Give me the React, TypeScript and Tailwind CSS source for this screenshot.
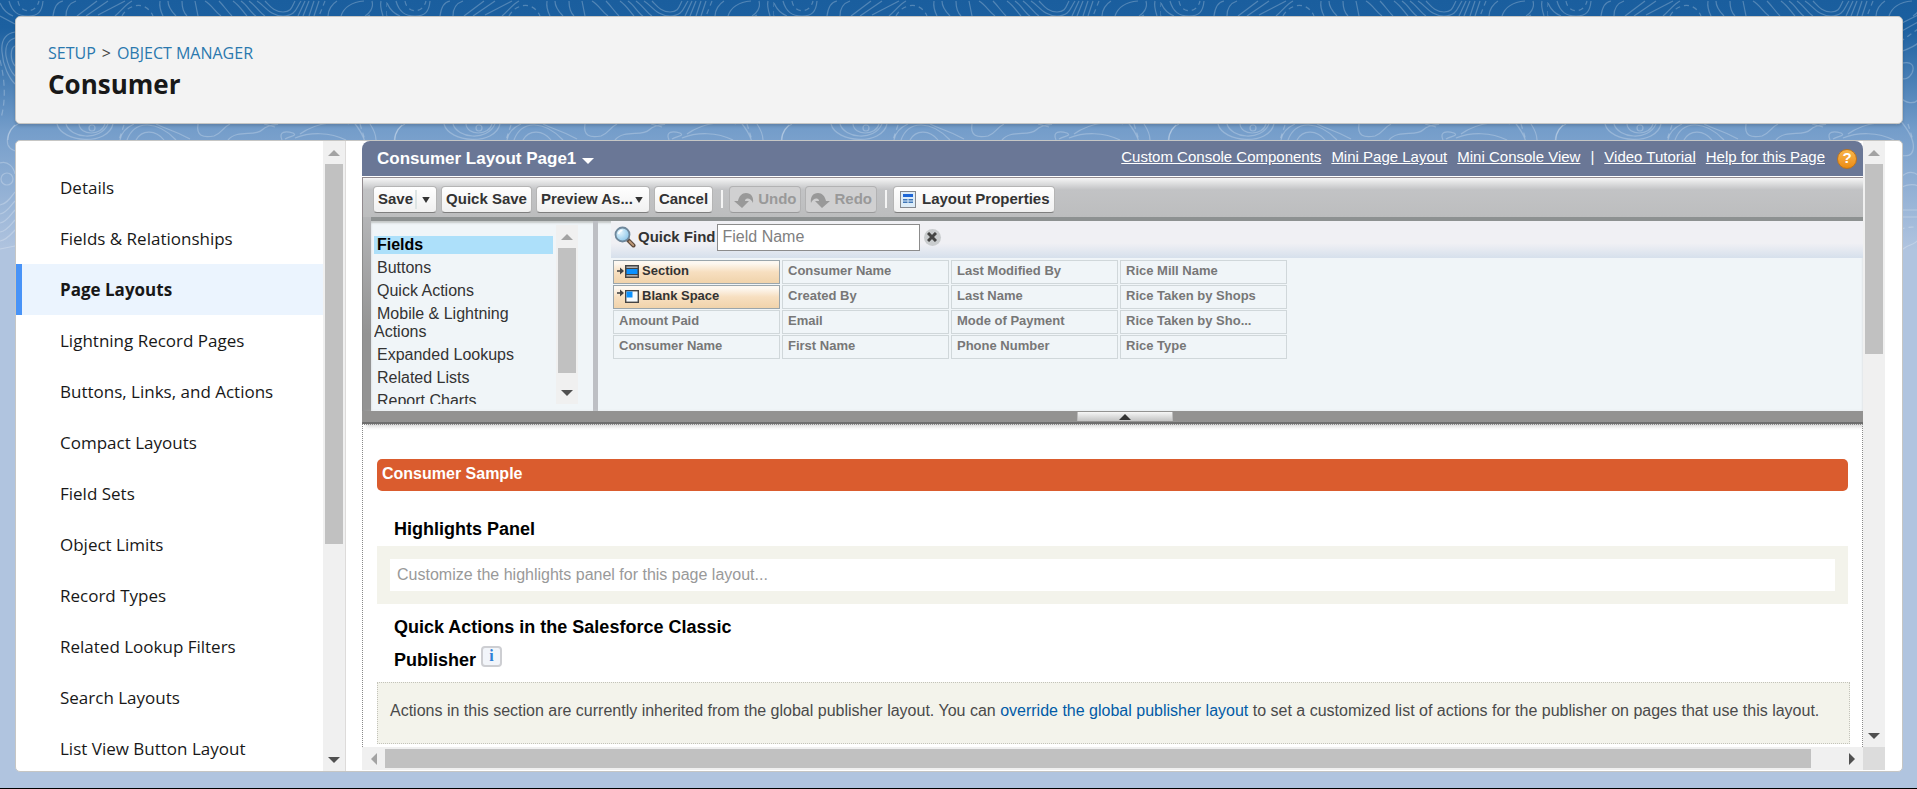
import type { ReactNode } from "react";

const setupLinks = [
  "Details",
  "Fields & Relationships",
  "Page Layouts",
  "Lightning Record Pages",
  "Buttons, Links, and Actions",
  "Compact Layouts",
  "Field Sets",
  "Object Limits",
  "Record Types",
  "Related Lookup Filters",
  "Search Layouts",
  "List View Button Layout",
];

const paletteCategories = [
  "Fields",
  "Buttons",
  "Quick Actions",
  "Mobile & Lightning Actions",
  "Expanded Lookups",
  "Related Lists",
  "Report Charts",
];

const fieldRows = [
  ["Section", "Consumer Name", "Last Modified By", "Rice Mill Name"],
  ["Blank Space", "Created By", "Last Name", "Rice Taken by Shops"],
  ["Amount Paid", "Email", "Mode of Payment", "Rice Taken by Sho..."],
  ["Consumer Name", "First Name", "Phone Number", "Rice Type"],
];

const helpLinks = ["Custom Console Components", "Mini Page Layout", "Mini Console View"];

function Contours() {
  return (
    <svg aria-hidden="true" className="absolute inset-x-0 top-0 -z-10 h-[252px] w-full">
      <defs>
        <pattern id="contours" width="387" height="252" patternUnits="userSpaceOnUse">
          <g fill="none" stroke="#fff" strokeOpacity="0.24" strokeWidth="1.2">
            <path d="M0 3C3 10 8 14 13 16M9 1C12 12 18 16 28 16S42 12 43 1M53 16C54 8 57 2 63 1M66 16C66 8 70 3 76 1M77 16L97 1M86 16L108 1" />
            <path d="M98 15L125 1M115 16C122 10 126 4 132 1M160 1C159 7 161 12 163 16M168 1C168 7 172 12 176 16M182 1C182 8 184 13 187 16M195 1L198 16" />
            <path d="M205 1C212 5 214 11 221 16M219 1C224 6 227 11 232 16M233 1C240 6 243 12 247 16M241 1C248 6 251 13 256 16M249 1C256 6 260 13 265 16M257 1C265 6 270 16 283 16S296 8 301 1M265 1C270 6 274 12 283 12S292 6 295 1M305 1L298 16M309 1L303 16M314 1L309 16M319 1L314 16" />
            <path d="M328 16C328 10 332 4 337 1M341 16C344 7 352 2 364 1M372 1C374 8 369 14 365 16M383 16C381 10 380 5 381 1" />
            <path strokeDasharray="5 4" d="M18 1C20 14 36 14 39 1M122 16C128 4 146 0 153 16M325 1L319 16M387 2V16" />
            <circle cx="92" cy="128" r="3" />
            <path d="M79 124C80 136 102 136 105 124M66 124C70 138 100 142 108 124M57 124C62 143 108 146 113 124M134 124C125 128 121 134 120 140M127 140C134 121 156 119 176 140M136 140C142 129 156 130 164 140M156 124C170 131 172 129 190 139" />
            <path d="M198 124C196 136 203 138 214 136C222 133 222 128 230 124M228 140C237 129 255 137 262 130C270 123 282 125 276 124M282 140C278 131 286 131 293 133C298 136 290 136 285 139M295 138C310 132 330 132 346 140M264 124L275 127M300 134C318 121 343 121 349 124M370 124C374 130 376 134 376 140M8 140C8 132 13 126 18 124" />
            <path strokeDasharray="5 4" d="M124 125L119 140M360 124L365 140" />
            <path d="M15 32C4 34 1 42 2 52C3 66 9 78 15 84M15 38C7 40 5 48 6 56C8 66 12 73 15 76M15 46C10 48 10 60 15 66M15 125C9 130 6 138 8 145C10 150 14 150 15 151M0 163C8 160 14 168 15 174M15 24L0 16" />
            <circle cx="7" cy="179" r="6" />
            <path d="M0 205C7 204 11 197 15 192M0 214C7 213 11 205 15 201M0 223C7 222 11 214 15 210M0 232C7 231 11 224 15 220M0 241C7 240 11 234 15 230M0 249L15 246" />
            <path strokeDasharray="6 4" d="M0 60C5 80 6 100 1 118" />
            <path d="M352 24L370 15M352 32L370 22M352 52C360 49 366 47 370 43M352 64C364 60 367 66 364 73C361 79 356 80 352 78M352 97C358 104 366 104 370 100M352 120C362 132 367 142 365 150C363 158 356 155 352 156M352 178C360 170 366 172 370 175M352 188C360 184 366 184 370 186M352 210H370M352 217H370M352 252C358 244 366 246 370 240" />
            <path strokeDasharray="5 4" d="M352 42L370 29M352 230C358 226 366 228 370 226" />
          </g>
        </pattern>
      </defs>
      <rect width="100%" height="252" fill="url(#contours)" />
    </svg>
  );
}

function Triangle({ className, d }: { className: string; d: string }) {
  return (
    <svg aria-hidden="true" viewBox="0 0 12 12" className={"h-3 w-3 " + className}>
      <path d={d} fill="currentColor" />
    </svg>
  );
}

const UP = "M0 9L6 3L12 9Z";
const DOWN = "M0 3L6 9L12 3Z";
const LEFT = "M9 0L3 6L9 12Z";
const RIGHT = "M3 0L9 6L3 12Z";
const CARET = "M1 2L6 10L11 2Z";

function VerticalBar({ thumb }: { thumb: string }) {
  return (
    <div aria-hidden="true" className="flex w-[22px] shrink-0 flex-col items-center bg-[#f0f0f0]">
      <div className="flex h-[23px] shrink-0 items-center">
        <Triangle d={UP} className="text-[#a3a3a3]" />
      </div>
      <div className="min-h-0 w-full flex-1 px-[2px]">
        <div className={"w-full bg-[#c1c1c1] " + thumb} />
      </div>
      <div className="flex h-[23px] shrink-0 items-center">
        <Triangle d={DOWN} className="text-[#505050]" />
      </div>
    </div>
  );
}

function ToolButton({ children, disabled = false }: { children: ReactNode; disabled?: boolean }) {
  return (
    <button
      type="button"
      disabled={disabled}
      className={
        "flex h-[27px] items-center rounded-[4px] border px-1 whitespace-nowrap " +
        (disabled
          ? "border-[#b2b2b3] border-b-[#9a9a9b] bg-[#d0d0d1] text-[#999]"
          : "border-[#b5b5b5] border-b-[#7f7f7f] bg-linear-to-b from-white to-[#f0f0f0] text-[#333]")
      }
    >
      {children}
    </button>
  );
}

function TurnArrow({ flip = false }: { flip?: boolean }) {
  return (
    <svg
      aria-hidden="true"
      viewBox="0 0 20 16"
      className={"mr-1 h-4 w-5 " + (flip ? "-scale-x-100" : "")}
    >
      <path d="M0 9H4C5 4 8 1 12 1C17 1 20 5 19 11C18 8 15 6 13 6.500C11.500 7 11 8 11 9H15L8 16Z" fill="#999" />
    </svg>
  );
}

function LayoutIcon() {
  return (
    <svg aria-hidden="true" viewBox="0 0 16 17" className="mr-[6px] ml-[2px] h-[17px] w-4">
      <rect x=".5" y=".5" width="15" height="16" fill="#dcecf8" stroke="#84888e" />
      <path d="M3 3h10v3h-10z" fill="#1d66d6" />
      <path d="M3 8h4.500v1.500H3zM8.500 8h4.500v1.500H8.500zM3 10.500h4.500V12H3zM8.500 10.500h4.500V12H8.500z" fill="#3f76b8" />
    </svg>
  );
}

function Magnifier() {
  return (
    <svg aria-hidden="true" viewBox="0 0 22 22" className="h-[22px] w-[22px]">
      <defs>
        <radialGradient id="lens" cx=".35" cy=".35" r=".8">
          <stop offset="0" stopColor="#e4f5fd" />
          <stop offset="1" stopColor="#7fbfe6" />
        </radialGradient>
      </defs>
      <path d="M13.500 13.500L19.500 19.500" stroke="#5d4a3c" strokeWidth="4" strokeLinecap="round" />
      <path d="M15.500 15.500L19.200 19.200" stroke="#c09a78" strokeWidth="1.800" strokeLinecap="round" />
      <circle cx="8.500" cy="8.500" r="7" fill="url(#lens)" stroke="#6f879b" strokeWidth="1.800" />
      <path d="M4.500 8C5 5.500 6.500 4.500 8.500 4.200" fill="none" stroke="#fff" strokeWidth="1.600" />
    </svg>
  );
}

function SectionIcon({ blank }: { blank: boolean }) {
  return (
    <svg aria-hidden="true" viewBox="0 0 22 14" className="mr-[3px] h-[14px] w-[22px] shrink-0">
      <g transform={blank ? "translate(0 -2)" : "translate(0 1)"}>
        <path d="M0 6h4" stroke="#444" strokeWidth="1.600" />
        <path d="M3 2.500L7 6L3 9.500Z" fill="#444" />
      </g>
      {blank ? (
        <>
          <rect x="8.700" y="1.700" width="12.600" height="11.600" fill="#f6fafd" stroke="#444" strokeWidth="1.400" />
          <rect x="9.500" y="2.500" width="6" height="6" fill="#0a91ff" />
        </>
      ) : (
        <>
          <rect x="8.700" y="1.700" width="12.600" height="11.600" fill="#b0b0b0" stroke="#444" strokeWidth="1.400" />
          <rect x="9" y="4.500" width="12" height="6" fill="#0a91ff" stroke="#444" />
        </>
      )}
    </svg>
  );
}

function SetupNav() {
  return (
    <div className="flex w-[330px] shrink-0 border-r border-[#dddbda]">
      <nav aria-label="Object setup" className="min-w-0 flex-1 overflow-hidden pt-[21px]">
        {setupLinks.map((label) => {
          const active = label === "Page Layouts";
          return (
            <a
              key={label}
              href="#"
              aria-current={active ? "page" : undefined}
              className={
                "flex h-[51px] items-center border-l-[6px] pl-[38px] text-[17px] " +
                (active
                  ? "border-[#4893f7] bg-[#ebf4fe] font-bold text-[#181818]"
                  : "border-transparent text-[#181818]")
              }
            >
              {label}
            </a>
          );
        })}
      </nav>
      <VerticalBar thumb="h-[65%]" />
    </div>
  );
}

function EditorHeader() {
  return (
    <div className="flex h-[35px] shrink-0 items-center justify-between rounded-t-lg bg-[#6a7796] pr-[6px] pl-[15px] text-white">
      <button type="button" className="flex items-center text-[17px] font-bold">
        Consumer Layout Page1
        <Triangle d={DOWN} className="mt-1 ml-[6px]" />
      </button>
      <div className="flex items-center text-[15px]">
        <div className="flex gap-[10px] pb-[2px]">
          {helpLinks.map((label) => (
            <a key={label} href="#" className="underline">
              {label}
            </a>
          ))}
          <span>|</span>
          <a href="#" className="underline">
            Video Tutorial
          </a>
          <a href="#" className="underline">
            Help for this Page
          </a>
        </div>
        <span
          aria-hidden="true"
          className="ml-3 flex h-5 w-5 items-center justify-center rounded-full border border-[#c0741a] bg-linear-to-b from-[#f8b64a] to-[#ec8c0c] text-[15px] font-bold"
        >
          ?
        </span>
      </div>
    </div>
  );
}

function Toolbar() {
  return (
    <div className="mt-px flex h-[40px] shrink-0 items-start gap-1 border-t border-l border-[#918a8e] bg-linear-to-b from-[#f6f6f6] via-[#c2c3c5] via-30% to-[#bcbdbe] pt-2 pl-[10px] text-[15px] font-bold">
      <ToolButton>
        Save
        <span className="mr-[3px] ml-[2px] h-[19px] w-[2px] bg-[#dde4e4]" />
        <Triangle d={CARET} className="scale-75 text-[#333]" />
      </ToolButton>
      <ToolButton>Quick Save</ToolButton>
      <ToolButton>
        Preview As...
        <Triangle d={CARET} className="scale-75 text-[#333]" />
      </ToolButton>
      <ToolButton>Cancel</ToolButton>
      <span className="mt-1 mr-[2px] ml-1 h-[18px] w-[2px] bg-[#f4f4f4]" />
      <ToolButton disabled>
        <TurnArrow />
        Undo
      </ToolButton>
      <ToolButton disabled>
        <TurnArrow flip />
        Redo
      </ToolButton>
      <span className="mt-1 mr-[2px] ml-1 h-[18px] w-[2px] bg-[#f4f4f4]" />
      <ToolButton>
        <LayoutIcon />
        Layout Properties
      </ToolButton>
    </div>
  );
}

function CategoryList() {
  return (
    <div className="flex w-[222px] shrink-0 pt-1 pb-[7px] pl-[3px]">
      <ul className="w-[179px] overflow-hidden pt-[11px] text-[16px] leading-[18px] text-[#333]">
        {paletteCategories.map((label) => (
          <li
            key={label}
            className={"mb-[5px] indent-[3px] " + (label === "Fields" ? "bg-[#ade0fa] font-bold text-black" : "")}
          >
            {label}
          </li>
        ))}
      </ul>
      <div className="ml-[3px] flex">
        <VerticalBar thumb="h-[94%]" />
      </div>
    </div>
  );
}

function FieldPalette() {
  return (
    <div className="min-w-0 flex-1 pl-[13px]">
      <div className="flex h-[37px] items-center bg-linear-to-b from-[#f0f0f4] from-60% to-[#d6e0ec] pb-[5px] pl-[3px]">
        <label htmlFor="quick-find" className="flex items-center gap-[2px] text-[15px] font-bold text-[#333]">
          <Magnifier />
          Quick Find
        </label>
        <input
          id="quick-find"
          type="text"
          placeholder="Field Name"
          className="ml-px h-[27px] w-[203px] border border-[#8c8c8c] bg-white px-[5px] text-[16px] placeholder:text-[#808080]"
        />
        <button
          type="button"
          aria-label="Clear"
          className="ml-1 flex h-[17px] w-[17px] items-center justify-center rounded-full bg-[#c9ccce]"
        >
          <svg aria-hidden="true" viewBox="0 0 10 10" className="h-[10px] w-[10px]">
            <path d="M1 1L9 9M9 1L1 9" stroke="#444" strokeWidth="3" />
          </svg>
        </button>
      </div>
      <table className="mt-px border-separate border-spacing-x-[2px] border-spacing-y-px text-[13px] leading-[18px] font-bold text-[#777]">
        <tbody>
          {fieldRows.map((row, r) => (
            <tr key={r}>
              {row.map((label, c) => {
                const tool = c === 0 && r < 2;
                return (
                  <td
                    key={c}
                    className={
                      "h-6 w-[167px] border pb-[3px] whitespace-nowrap " +
                      (tool
                        ? "border-[#9aa5ab] bg-linear-to-b from-[#fdf8f1] from-10% via-[#f7dfc0] via-50% to-[#f0d3ab] pl-[3px] text-[#333]"
                        : "border-[#d0d7da] pl-[5px]")
                    }
                  >
                    {tool ? (
                      <span className="flex items-center">
                        <SectionIcon blank={r === 1} />
                        {label}
                      </span>
                    ) : (
                      label
                    )}
                  </td>
                );
              })}
            </tr>
          ))}
        </tbody>
      </table>
    </div>
  );
}

function LayoutPreview() {
  return (
    <div className="min-h-0 flex-1 overflow-hidden border-x border-t border-dotted border-[#8a8a8a] px-[14px] pt-[34px]">
      <h2 className="flex h-8 items-center rounded-[5px] bg-[#da5c2e] px-[5px] pb-[2px] text-[16px] font-bold text-white">
        Consumer Sample
      </h2>
      <h3 className="mt-[22px] pl-[17px] text-[18px] leading-[33px] font-bold text-black">Highlights Panel</h3>
      <div className="bg-[#f3f3eb] p-[13px]">
        <p className="bg-white px-[7px] text-[16px] leading-8 text-[#999]">
          Customize the highlights panel for this page layout...
        </p>
      </div>
      <h3 className="mt-[7px] w-[400px] pl-[17px] text-[18px] leading-[33px] font-bold text-black">
        Quick Actions in the Salesforce Classic Publisher{" "}
        <button
          type="button"
          aria-label="Information"
          className="inline-flex h-[21px] w-[21px] items-center justify-center rounded-[4px] border-2 border-[#cdced2] bg-[#f2f5fa] align-[5px] font-['Liberation_Serif',serif] text-[16px] leading-none font-bold text-[#2f7fd6]"
        >
          i
        </button>
      </h3>
      <div className="mt-[5px] -mr-[2px] border border-dotted border-[#c3c3ba] bg-[#f3f3eb] px-3 pt-3 pb-4 text-[16px] leading-8 whitespace-nowrap text-[#4a4a4a]">
        Actions in this section are currently inherited from the global publisher layout. You can{" "}
        <a href="#" className="text-[#015ba7]">
          override the global publisher layout
        </a>{" "}
        to set a customized list of actions for the publisher on pages that use this layout.
      </div>
    </div>
  );
}

function HorizontalBar() {
  return (
    <div aria-hidden="true" className="flex h-[23px] shrink-0 bg-[#f0f0f0]">
      <div className="flex w-[23px] items-center justify-center">
        <Triangle d={LEFT} className="text-[#a3a3a3]" />
      </div>
      <div className="min-w-0 flex-1 py-[2px]">
        <div className="h-full w-[98%] bg-[#c1c1c1]" />
      </div>
      <div className="flex w-[23px] items-center justify-center">
        <Triangle d={RIGHT} className="text-[#505050]" />
      </div>
      <div className="w-[22px] bg-[#dcdcdc]" />
    </div>
  );
}

function LayoutEditor() {
  return (
    <section className="mr-[17px] ml-4 flex min-w-0 flex-1 flex-col pb-px font-['Liberation_Sans',Arial,sans-serif]">
      <div className="flex min-h-0 flex-1">
        <div className="flex min-w-0 flex-1 flex-col">
          <EditorHeader />
          <Toolbar />
          <div className="flex h-[194px] shrink-0 border-l border-[#8b8b8b] bg-linear-to-b from-[#b4b5b7] to-[#939393] to-60% pl-2">
            <div className="flex min-w-0 flex-1 border-t-4 border-t-[#8d9191] bg-[#f0f5f8] shadow-[inset_0_2px_2px_#c4c8c8]">
              <CategoryList />
              <div className="w-[5px] shrink-0 bg-[#bdbfc4]" />
              <FieldPalette />
            </div>
          </div>
          <div className="flex h-[13px] shrink-0 items-center justify-center border-b-2 border-[#6e6e6e] bg-[#939291] pl-6 shadow-[4px_2px_4px_#ccc]">
            <button
              type="button"
              aria-label="Collapse palette"
              className="flex h-[9px] w-24 items-center justify-center border-x border-[#bbb] bg-linear-to-b from-[#f6f6f6] to-[#c4c4c4]"
            >
              <Triangle d={UP} className="text-[#333]" />
            </button>
          </div>
          <LayoutPreview />
        </div>
        <VerticalBar thumb="h-[34%]" />
      </div>
      <HorizontalBar />
    </section>
  );
}

export default function App() {
  return (
    <div className="relative isolate flex h-screen flex-col gap-4 overflow-hidden border-b border-black bg-[#b0c4df] bg-[linear-gradient(#1a5e9e_0,#1c60a0_28px,#749dca_130px,#b0c4df_250px)] px-[14px] pt-4 pb-4 pl-[15px] font-['Open_Sans','Noto_Sans',sans-serif]">
      <Contours />
      <header className="h-[108px] shrink-0 rounded-[5px] border border-[#c6c6c4] bg-[#f3f3f3] px-8 pt-[21px] shadow-[0_2px_3px_rgba(0,0,0,0.15)]">
        <nav aria-label="Breadcrumb" className="flex gap-[6px] text-[16px] leading-[30px] text-[#2a78ae]">
          <a href="#">SETUP</a>
          <span className="text-[#444]">&gt;</span>
          <a href="#">OBJECT MANAGER</a>
        </nav>
        <h1 className="text-[26px] leading-[32px] font-bold text-[#181818]">Consumer</h1>
      </header>
      <main className="flex min-h-0 flex-1 overflow-hidden rounded-[5px] border border-[#c6c6c4] bg-white">
        <SetupNav />
        <LayoutEditor />
      </main>
    </div>
  );
}
